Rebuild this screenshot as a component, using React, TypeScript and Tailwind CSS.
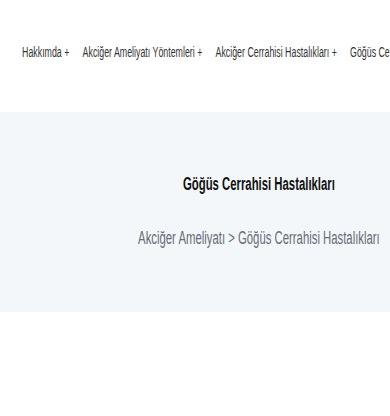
export default function App() {
  const nav = [
    'Hakkımda +',
    'Akciğer Ameliyatı Yöntemleri +',
    'Akciğer Cerrahisi Hastalıkları +',
    'Göğüs Cerrahisi Hastalıkları +',
  ];

  return (
    <div className="w-[390px] h-[416px] overflow-hidden bg-white" style={{ fontFamily: '"Liberation Sans", Arial, sans-serif' }}>
      {/* the page is shown squeezed sideways, so scale it as a whole */}
      <div className="w-[822px] origin-top-left scale-x-[0.63]">
        <header className="h-[112px] pt-[42px] pl-[35px]">
          <nav className="flex gap-[21px] whitespace-nowrap text-[14px] leading-[20px] text-[#333]">
            {nav.map((item) => (
              <a key={item} href="#">
                {item}
              </a>
            ))}
          </nav>
        </header>

        <section className="h-[200px] bg-[#f3f7f9] flex flex-col items-center pt-[60px]">
          <h1 className="text-[18px] font-bold text-[#111] leading-[24px]">Göğüs Cerrahisi Hastalıkları</h1>
          <p className="mt-[30px] text-[18px] text-[#676c78] leading-[24px]">
            Akciğer Ameliyatı &gt; Göğüs Cerrahisi Hastalıkları
          </p>
        </section>
      </div>
    </div>
  );
}
